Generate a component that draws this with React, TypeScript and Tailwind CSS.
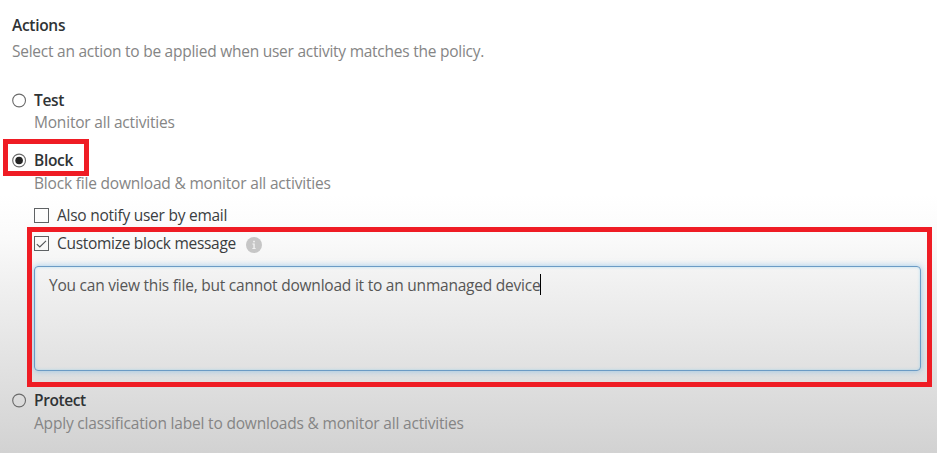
function Radio({ checked = false }: { checked?: boolean }) {
  return (
    <svg className="block h-[15px] w-[15px] shrink-0" viewBox="0 0 15 15" fill="none">
      <circle cx="7.1" cy="7.5" r="6.4" stroke="#6a6a6a" strokeWidth="1.1" />
      {checked && <circle cx="7.1" cy="7.5" r="3.8" fill="#242424" />}
    </svg>
  );
}

function Checkbox({ checked = false }: { checked?: boolean }) {
  return (
    <svg className="block h-[15px] w-[15px] shrink-0" viewBox="0 0 15 15" fill="none">
      <rect x="0.5" y="0.5" width="14" height="14" stroke="#5f6264" />
      {checked && <path d="M2.8 8.1 5.8 11 12 4.9" stroke="#505355" strokeWidth="1.1" />}
    </svg>
  );
}

function Option({ title, detail, checked, titleClass, detailClass }: {
  title: string;
  detail: string;
  checked?: boolean;
  titleClass: string;
  detailClass: string;
}) {
  return (
    <div>
      <div className="flex h-[21px] items-center gap-[7px]">
        <Radio checked={checked} />
        <span className={"pb-px font-semibold text-[#2f3335] " + titleClass}>{title}</span>
      </div>
      <p className={"h-[22px] pl-[22px] text-[#858585] " + detailClass}>{detail}</p>
    </div>
  );
}

export default function App() {
  return (
    <main className="relative h-[453px] w-[937px] overflow-hidden whitespace-nowrap bg-[linear-gradient(180deg,#ffffff_0px,#ffffff_195px,#fafafa_238px,#f0f0f0_286px,#e1e1e1_370px,#d2d2d2_453px)] pl-3 pt-[14px] font-['Open_Sans','Noto_Sans',sans-serif] text-[15.5px] leading-[22px]">
      <h1 className="h-[22px] font-semibold tracking-[-0.3px] text-[#2f3335]">Actions</h1>
      <p className="mt-1 h-[22px] tracking-[-0.25px] text-[#858585]">Select an action to be applied when user activity matches the policy.</p>

      <div className="mt-7">
        <Option title="Test" detail="Monitor all activities" titleClass="tracking-[-0.35px]" detailClass="tracking-[-0.2px]" />
      </div>
      <div className="mt-[17px]">
        <Option checked title="Block" detail="Block file download & monitor all activities" titleClass="tracking-[-0.3px]" detailClass="mt-px tracking-[-0.19px]" />
      </div>

      <div className="pl-[22px] text-[#3a3d3f]">
        <div className="mt-[11px] flex h-[21px] items-center gap-2">
          <Checkbox />
          <span className="pb-px tracking-[-0.25px]">Also notify user by email</span>
        </div>
        <div className="mt-[7px] flex h-[21px] items-center gap-2">
          <Checkbox checked />
          <span className="w-[181px] pb-px tracking-[-0.29px]">Customize block message</span>
          <svg className="mt-[3px] block h-4 w-4" viewBox="0 0 16 16">
            <circle cx="8" cy="8" r="8" fill="#c6c6c6" />
            <rect x="7.2" y="3.8" width="1.6" height="1.5" fill="#f5f5f5" />
            <path d="M6.4 6.6h2.3v4.6h1.1v.8H6.2v-.8h1.2V7.4h-1z" fill="#f5f5f5" />
          </svg>
        </div>
        <div className="mt-3 flex h-[105px] w-[887px] rounded-[4px] border border-[#6b9bc5] pl-[14px] pt-[7px] shadow-[0_0_6px_rgba(100,175,230,0.6),inset_0_0_3px_rgba(120,200,240,0.55)]">
          <span className="tracking-[-0.225px] text-[#565656]">You can view this file, but cannot download it to an unmanaged device</span>
          <span className="h-[21px] w-px bg-black" />
        </div>
      </div>

      <div className="mt-[19px]">
        <Option title="Protect" detail="Apply classification label to downloads & monitor all activities" titleClass="tracking-[-0.4px]" detailClass="mt-px tracking-[-0.19px]" />
      </div>

      <div className="absolute left-[3px] top-[139px] h-[37px] w-[86px] border-[5px] border-[#ef1c24]" />
      <div className="absolute left-[27px] top-[227px] h-[160px] w-[905px] border-[5px] border-[#ef1c24]" />
    </main>
  );
}
